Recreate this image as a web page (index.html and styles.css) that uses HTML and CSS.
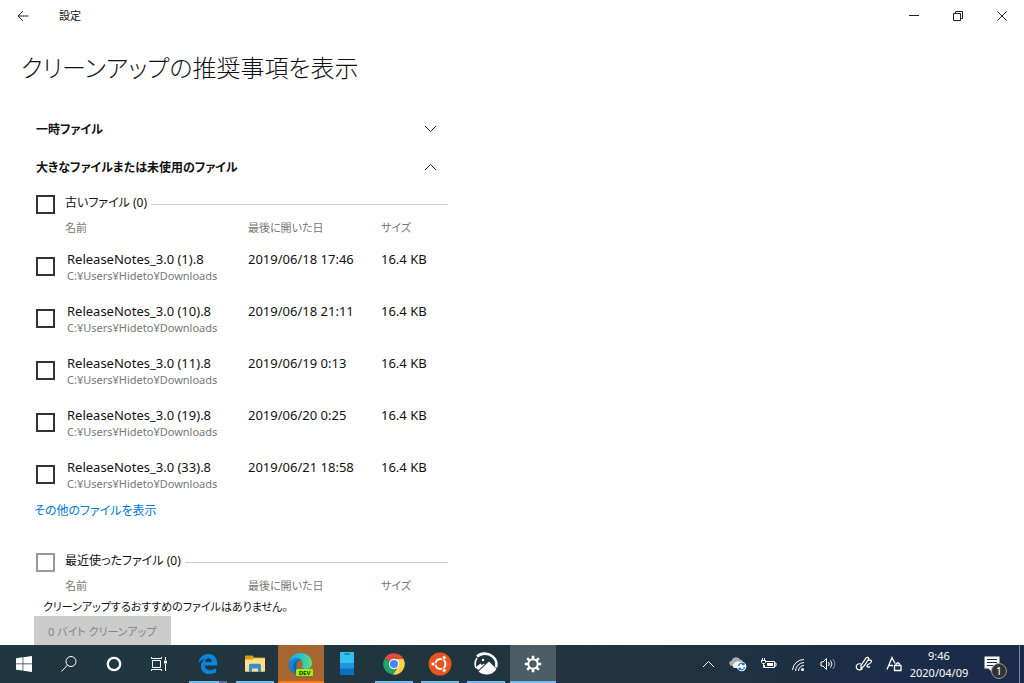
FILE: index.html
```html
<!DOCTYPE html>
<html lang="ja">
<head>
<meta charset="utf-8">
<title>設定</title>
<link rel="stylesheet" href="styles.css">
</head>
<body>
<header class="titlebar">
  <button class="back" aria-label="戻る"><svg width="12" height="12" viewBox="0 0 12 12" class="line"><path d="M11.5 6H1M6 1L1 6l5 5"/></svg></button>
  <span class="app-name">設定</span>
  <div class="window-controls">
    <button aria-label="最小化"><svg width="12" height="12" viewBox="0 0 12 12" class="line"><path d="M1 5.500h10"/></svg></button>
    <button aria-label="元に戻す"><svg width="12" height="12" viewBox="0 0 12 12" class="line"><path d="M1.500 3.500h7v7h-7zM3.500 3.500v-2h7v7h-2"/></svg></button>
    <button aria-label="閉じる"><svg width="12" height="12" viewBox="0 0 12 12" class="line"><path d="M1.500 1.500l9 9M10.500 1.500l-9 9"/></svg></button>
  </div>
</header>
<main class="page">
  <h1>クリーンアップの推奨事項を表示</h1>
  <div class="sections">
    <button class="expander" aria-expanded="false"><span>一時ファイル</span><svg width="13" height="8" viewBox="0 0 13 8" class="line"><path d="M1 1l5.500 5.500L12 1"/></svg></button>
    <button class="expander" aria-expanded="true"><span>大きなファイルまたは未使用のファイル</span><svg width="13" height="8" viewBox="0 0 13 8" class="line"><path d="M1 7l5.500-5.500L12 7"/></svg></button>

    <section class="group">
      <div class="group-head"><input type="checkbox" id="old"><label for="old">古いファイル (0)</label><span class="rule"></span></div>
      <table class="files">
        <thead><tr><th class="col-check"></th><th class="col-name">名前</th><th class="col-date">最後に開いた日</th><th>サイズ</th></tr></thead>
        <tbody>
          <tr><td><input type="checkbox" id="f1"></td><td><label for="f1">ReleaseNotes_3.0 (1).8<small>C:¥Users¥Hideto¥Downloads</small></label></td><td>2019/06/18 17:46</td><td>16.4 KB</td></tr>
          <tr><td><input type="checkbox" id="f2"></td><td><label for="f2">ReleaseNotes_3.0 (10).8<small>C:¥Users¥Hideto¥Downloads</small></label></td><td>2019/06/18 21:11</td><td>16.4 KB</td></tr>
          <tr><td><input type="checkbox" id="f3"></td><td><label for="f3">ReleaseNotes_3.0 (11).8<small>C:¥Users¥Hideto¥Downloads</small></label></td><td>2019/06/19 0:13</td><td>16.4 KB</td></tr>
          <tr><td><input type="checkbox" id="f4"></td><td><label for="f4">ReleaseNotes_3.0 (19).8<small>C:¥Users¥Hideto¥Downloads</small></label></td><td>2019/06/20 0:25</td><td>16.4 KB</td></tr>
          <tr><td><input type="checkbox" id="f5"></td><td><label for="f5">ReleaseNotes_3.0 (33).8<small>C:¥Users¥Hideto¥Downloads</small></label></td><td>2019/06/21 18:58</td><td>16.4 KB</td></tr>
        </tbody>
      </table>
      <a class="more" href="#">その他のファイルを表示</a>
    </section>

    <section class="group recent">
      <div class="group-head"><input type="checkbox" id="recent" disabled><label for="recent">最近使ったファイル (0)</label><span class="rule"></span></div>
      <table class="files">
        <thead><tr><th class="col-check"></th><th class="col-name">名前</th><th class="col-date">最後に開いた日</th><th>サイズ</th></tr></thead>
      </table>
      <p class="empty">クリーンアップするおすすめのファイルはありません。</p>
      <button class="clean" disabled>0 バイト クリーンアップ</button>
    </section>
  </div>
</main>
<footer class="taskbar">
  <nav class="system">
    <button aria-label="スタート"><svg width="16" height="16" viewBox="0 0 16 16" fill="#fff"><path d="M0 2.300l6.600-1v6.300H0zM7.300 1.200L16 0v7.600H7.300zM0 8.300h6.600v6.300L0 13.700zM7.300 8.300H16V16l-8.700-1.300z"/></svg></button>
    <button aria-label="検索"><svg width="18" height="18" viewBox="0 0 18 18" class="light"><circle cx="11" cy="6.500" r="5"/><path d="M7.500 10L1.500 16.500"/></svg></button>
    <button aria-label="Cortana"><svg width="16" height="16" viewBox="0 0 16 16" fill="none" stroke="#fff" stroke-width="2.300"><circle cx="8" cy="8" r="6.200"/></svg></button>
    <button aria-label="タスク ビュー"><svg width="18" height="16" viewBox="0 0 18 16" class="light"><path d="M2.500 4.500h8v7h-8zM1.500 1v1.500h10V1M1.500 15v-1.500h10V15M15.500 1v3M15.500 8v7"/><path d="M14 4.500h3v3h-3z" fill="#fff" stroke="none"/></svg></button>
  </nav>
  <nav class="apps">
    <button class="running stacked" aria-label="Microsoft Edge"><svg width="20" height="22" viewBox="0 0 20 22"><path fill="#0a84e0" d="M.5 10C1.500 4 5.500 1 10.500 1c5.300 0 8.700 4 8.700 9v2.400H6.800c.2 3.300 2.600 4.600 5.300 4.600 2.400 0 4.400-.7 6-1.700v4c-1.900 1.100-4.200 1.700-6.700 1.700-5.300 0-8.500-3.300-8.500-7.800 0-3.700 2-6.200 4.600-7.300C4.500 6.100 2 7.500.5 10zm6.500-1h6.700c0-2.200-1-3.700-3.200-3.700C8.600 5.300 7.300 6.700 7 9z"/></svg></button>
    <button class="running" aria-label="エクスプローラー"><svg width="20" height="18" viewBox="0 0 20 18"><path fill="#d99a13" d="M0 1.500Q0 .5 1 .5h6.500L9 2.500h10q1 0 1 1V16H0z"/><path fill="#ffe083" d="M0 4.500h7.500l1.300-1.300H20V16q0 .7-.7.700H.7Q0 16.700 0 16z"/><path fill="#388bd5" d="M4 17v-6.700q0-1.500 1.500-1.500h9q1.500 0 1.500 1.500V17h-3v-3.500H7V17z"/></svg></button>
    <button class="running alert" aria-label="Microsoft Edge Dev"><svg width="25" height="24" viewBox="0 0 25 24"><defs><linearGradient id="ed" x1="0" x2="1"><stop stop-color="#18a7df"/><stop offset=".55" stop-color="#29c3c7"/><stop offset="1" stop-color="#67dd70"/></linearGradient></defs><path fill="url(#ed)" d="M.8 12C1 5.500 6 1 12.300 1 19 1 24 5.600 24 11c0 4-3 6-6.500 6-2.700 0-4.100-1-4.100-2 0-.7 1.300-1.100 1.300-3.200 0-2.500-2.300-4.700-5.800-4.700C5.500 7.100 2.500 9 .8 12z"/><path fill="#0b63b6" d="M.8 12C2 8.300 5.300 6.500 8.900 6.500c1.700 0 3.200.4 4.300 1.300C10 8.500 8.300 11 8.300 14c0 4.200 2.800 7.500 7 8.500-1 .3-2 .5-3 .5C5.700 23 .5 18 .8 12z"/><path fill="#1683d8" d="M.8 12C2 8.300 5.300 6.500 8.900 6.500c1.700 0 3.200.4 4.300 1.300C9 7.500 5.300 10 5.300 14.500c0 2.500 1 5 3 7C3.500 20 .5 16.500.8 12z"/><path fill="#a76532" d="M9.500 13.500c0-2 1.300-3.500 3-3.500 1.500 0 2.400 1 2.200 2.400-.2 1.300-1.200 1.800-1.200 2.600 0 .9 1 1.700 2.500 2h-5.500c-.7-1-1-2.200-1-3.500z"/><rect x="8" y="17" width="17" height="7" rx="1" fill="#9bf00b"/><text x="16.500" y="23" class="badge-text">DEV</text></svg></button>
    <button aria-label="スマホ同期"><svg width="14" height="23" viewBox="0 0 14 23"><rect width="14" height="23" rx="1" fill="#35c1ef"/><path fill="#1f96df" d="M0 11h14v6H0z"/><path fill="#0871c4" d="M0 16.500h14V22q0 1-1 1H1q-1 0-1-1z"/><path stroke="#12516c" d="M4.500 2h5"/></svg></button>
    <button class="running" aria-label="Google Chrome"><svg width="22" height="22" viewBox="0 0 22 22"><path fill="#dc4d3f" d="M11 11L1.700 5.500A10.700 10.700 0 0 1 20.500 6z"/><path fill="#1da362" d="M11 11L1.700 5.500A10.700 10.700 0 0 0 10 21.600l4.500-8.500z"/><path fill="#ffcf45" d="M11 6h9.500A10.700 10.700 0 0 1 10 21.600l5.300-8.100z"/><circle cx="11" cy="11" r="5.200" fill="#fff"/><circle cx="11" cy="11" r="4" fill="#4285f4"/></svg></button>
    <button class="running" aria-label="Ubuntu"><svg width="24" height="24" viewBox="0 0 24 24"><circle cx="12" cy="12" r="11.500" fill="#e95420"/><circle cx="12.500" cy="12" r="5" fill="none" stroke="#fff" stroke-width="2.200"/><path d="M12.500 12H5M12.500 12l3.800-6.600M12.500 12l3.800 6.600" stroke="#e95420" stroke-width="1.300"/><g fill="#fff" stroke="#e95420" stroke-width=".8"><circle cx="5" cy="12" r="2"/><circle cx="16.200" cy="5.700" r="2"/><circle cx="16.200" cy="18.300" r="2"/></g></svg></button>
    <button class="running" aria-label="フォト ビューアー"><svg width="24" height="24" viewBox="0 0 24 24"><path fill="none" stroke="#fff" stroke-width="2.600" d="M3 4.500C7 .8 14 .8 18 4c4 3 5 7.500 4 11.500"/><path fill="none" stroke="#fff" stroke-width="1.600" d="M3 6C1 9 .8 13 2 16"/><path fill="#fff" d="M4.500 19.500L15 9.500l7.500 7.500q-3.500 5.500-10 5.500-5 0-8-3z"/><path fill="#fff" d="M2 15l4.500-3.500L8 13l2-1.500.5 1-6 5.500Q2.500 17 2 15z"/><circle cx="9" cy="8" r="1.200" fill="#fff"/></svg></button>
    <button class="running active" aria-label="設定"><svg width="18" height="18" viewBox="0 0 18 18" fill="none" stroke="#fff"><circle cx="9" cy="9" r="4.700" stroke-width="2"/><g stroke-width="2.600"><path d="M9 .8v3M9 14.200v3M.8 9h3M14.200 9h3M3.200 3.200l2.100 2.100M12.700 12.700l2.100 2.100M3.200 14.800l2.100-2.100M12.700 5.300l2.100-2.100"/></g></svg></button>
  </nav>
  <div class="tray">
    <button aria-label="隠れているインジケーター"><svg width="13" height="8" viewBox="0 0 13 8" class="light"><path d="M1 7l5.500-5.500L12 7"/></svg></button>
    <button aria-label="OneDrive"><svg width="18" height="16" viewBox="0 0 18 16"><path fill="#a5adb1" d="M3 10a2.600 2.600 0 0 1-.3-5.200A4.500 4.500 0 0 1 11 3.500 4 4 0 0 1 14.500 8v2z"/><path fill="#edf0f1" d="M5 12a3 3 0 0 1 .3-5A4 4 0 0 1 12 7l2 5z"/><circle cx="12.500" cy="10.500" r="4.800" fill="#fff"/><path d="M9.500 10a3 3 0 0 1 5.500-1.500M15 6.500v2.200h-2.200M15.500 11a3 3 0 0 1-5.500 1.500M10 14.500v-2.200h2.200" fill="none" stroke="#1679ca" stroke-width="1.300"/></svg></button>
    <button aria-label="電源"><svg width="17" height="14" viewBox="0 0 17 14" class="light"><path d="M6 4.500h8.500v6h-10V8M14.500 6H16v3h-1.500M1 3.500h5M2.500 1v2M4.500 1v2M1.500 3.500v2l1 1h2l1-1v-2M3.500 6.500v4h1"/><path fill="#fff" stroke="none" d="M7 6h6v3H7z"/></svg></button>
    <button aria-label="ネットワーク"><svg width="15" height="15" viewBox="0 0 15 15" class="light"><path d="M1.500 13A11.500 11.500 0 0 1 13 2.500M4.500 14A8.800 8.800 0 0 1 13 5.500M7.500 14A5.500 5.500 0 0 1 13 8.500"/><circle cx="11.500" cy="12.500" r="1.500" fill="#fff" stroke="none"/></svg></button>
    <button aria-label="音量"><svg width="16" height="14" viewBox="0 0 16 14" class="light"><path d="M1 5h2l3.500-3.500v11L3 9H1zM8.500 5q1.500 2 0 4M10.500 3.500q3 3.500 0 7"/><path d="M12.700 2q4.500 5 0 10" opacity=".5"/></svg></button>
    <button class="pen" aria-label="Windows Ink"><svg width="18" height="16" viewBox="0 0 18 16" class="light"><path stroke-width="1.200" d="M6 12.500V9.500L11 2q2-1.500 3 .5L9 10zM6 8C2.500 7 .5 9.500 1.500 12s4 2.500 6 .5M13 4.500q3-1 3.500.5T13 8.500q-2 2-.5 2.500t2.500-.5"/></svg></button>
    <button aria-label="入力モード"><svg width="16" height="16" viewBox="0 0 16 16" class="light" stroke-width="1.300"><path d="M1 13.500L6 1.500l3 6M3 9.500h4M8.500 9.500H15v5H8.500zM10 9.500V8q1.700-2.500 3.500 0v1.500"/></svg></button>
    <time class="clock" datetime="2020-04-09T09:46"><span>9:46</span><span>2020/04/09</span></time>
    <button class="notices" aria-label="通知"><svg width="17" height="16" viewBox="0 0 17 16"><path fill="#fff" d="M.5.500h15v12H8V16l-3.500-3.500h-4z"/><path stroke="#1b2c49" d="M3 3.500h10M3 6.500h10M3 9.500h6"/></svg><span class="count">1</span></button>
    <button class="desktop" aria-label="デスクトップの表示"></button>
  </div>
</footer>
</body>
</html>
```

FILE: styles.css
```css
* { box-sizing: border-box; }
body {
  margin: 0;
  height: 100vh;
  display: flex;
  flex-direction: column;
  overflow: hidden;
  background: #fff;
  color: #111;
  font: 12px/18px "Noto Sans", "Noto Sans CJK JP", sans-serif;
  font-feature-settings: "palt";
}
button {
  border: 0;
  padding: 0;
  background: none;
  color: inherit;
  font: inherit;
  font-feature-settings: inherit;
}
svg { display: block; flex: none; }
.line { fill: none; stroke: #222; }
.light { fill: none; stroke: #fff; }

.titlebar { display: flex; align-items: center; flex: none; height: 31px; }
.back { width: 45px; height: 100%; display: grid; place-items: center; }
.app-name { margin-left: 14px; font-size: 11px; }
.window-controls { display: flex; height: 100%; margin-left: auto; }
.window-controls button { width: 44px; display: grid; place-items: center; }

.page { flex: 1; min-height: 0; overflow: hidden; padding: 0 21px; }
h1 { margin: 16px 0 22px; font-size: 24px; line-height: 41px; font-weight: 300; }
.sections { max-width: 412px; margin-left: 15px; }
.expander {
  display: flex;
  align-items: center;
  justify-content: space-between;
  width: 100%;
  height: 38px;
  padding-right: 11px;
  font-weight: 700;
}
.expander span { padding-top: 2px; }
.group { margin-top: 3px; }
.group.recent { margin-top: 26px; }
.group-head { display: flex; align-items: center; height: 30px; }
.group-head label { margin: 0 4px 2px 10px; }
.rule { flex: 1; height: 1px; background: #ccc; }
input[type="checkbox"] {
  appearance: none;
  display: block;
  flex: none;
  width: 19px;
  height: 19px;
  margin: 0;
  border: 2px solid #333;
  background: #fff;
}
input[type="checkbox"]:disabled { border-color: #999; }

.files { width: 100%; table-layout: fixed; border-collapse: collapse; }
.files th {
  height: 21px;
  padding: 0;
  text-align: left;
  vertical-align: top;
  font-size: 11px;
  font-weight: 400;
  color: #777;
}
.col-check { width: 29px; }
.col-name { width: 183px; }
.col-date { width: 133px; }
.files td { height: 52px; padding: 10px 0 0; vertical-align: top; font-size: 13px; }
.files td:first-child { padding: 0; vertical-align: middle; }
.files label { display: block; padding-left: 2px; }
.files small { display: block; font-size: 11px; line-height: 15px; color: #777; }
.more { display: block; width: max-content; height: 21px; margin-left: -2px; line-height: 22px; color: #0078d7; text-decoration: none; }
.empty { margin: 0 0 0 7px; font-size: 11px; line-height: 18px; }
.clean { height: 32px; margin-left: -2px; padding: 0 14px; background: #ccc; color: #858585; font-size: 11px; }

.taskbar {
  display: flex;
  flex: none;
  height: 38px;
  background: linear-gradient(90deg, #21373f 0%, #20343d 65%, #1b2c49 88%, #1b2c49 100%);
  color: #fff;
}
.taskbar button { display: grid; place-items: center; }
.system { display: flex; padding: 0 4px 0 1px; }
.system button { width: 45px; }
.apps { display: flex; width: 371px; }
.apps button { flex: 1; padding-bottom: 1px; }
.running { background: linear-gradient(#76b9ed, #76b9ed) 50% 100% / 38px 2px no-repeat; }
.stacked { background-image: linear-gradient(90deg, #76b9ed 80%, #4c7590 80%); }
.running.alert { background: linear-gradient(#ff7811, #ff7811) 50% 100% / 100% 2px no-repeat #a76532; }
.running.active { background-size: 100% 2px; background-color: #4b5c64; }
.badge-text { font: 700 6px "Noto Sans", sans-serif; text-anchor: middle; fill: #163300; }
.tray { display: flex; margin-left: auto; }
.tray button { width: 30px; }
.tray .pen { margin-left: 6px; }
.clock { display: flex; flex-direction: column; justify-content: center; width: 60px; text-align: center; font-size: 11px; line-height: 17px; }
.tray .notices { position: relative; width: 46px; }
.count {
  position: absolute;
  left: 22px;
  top: 18px;
  width: 16px;
  height: 16px;
  border: 1px solid #999;
  border-radius: 50%;
  background: #333;
  font-size: 11px;
  line-height: 14px;
}
.tray .desktop { width: 5px; margin-left: 4px; border-left: 1px solid #7b8595; }
```
